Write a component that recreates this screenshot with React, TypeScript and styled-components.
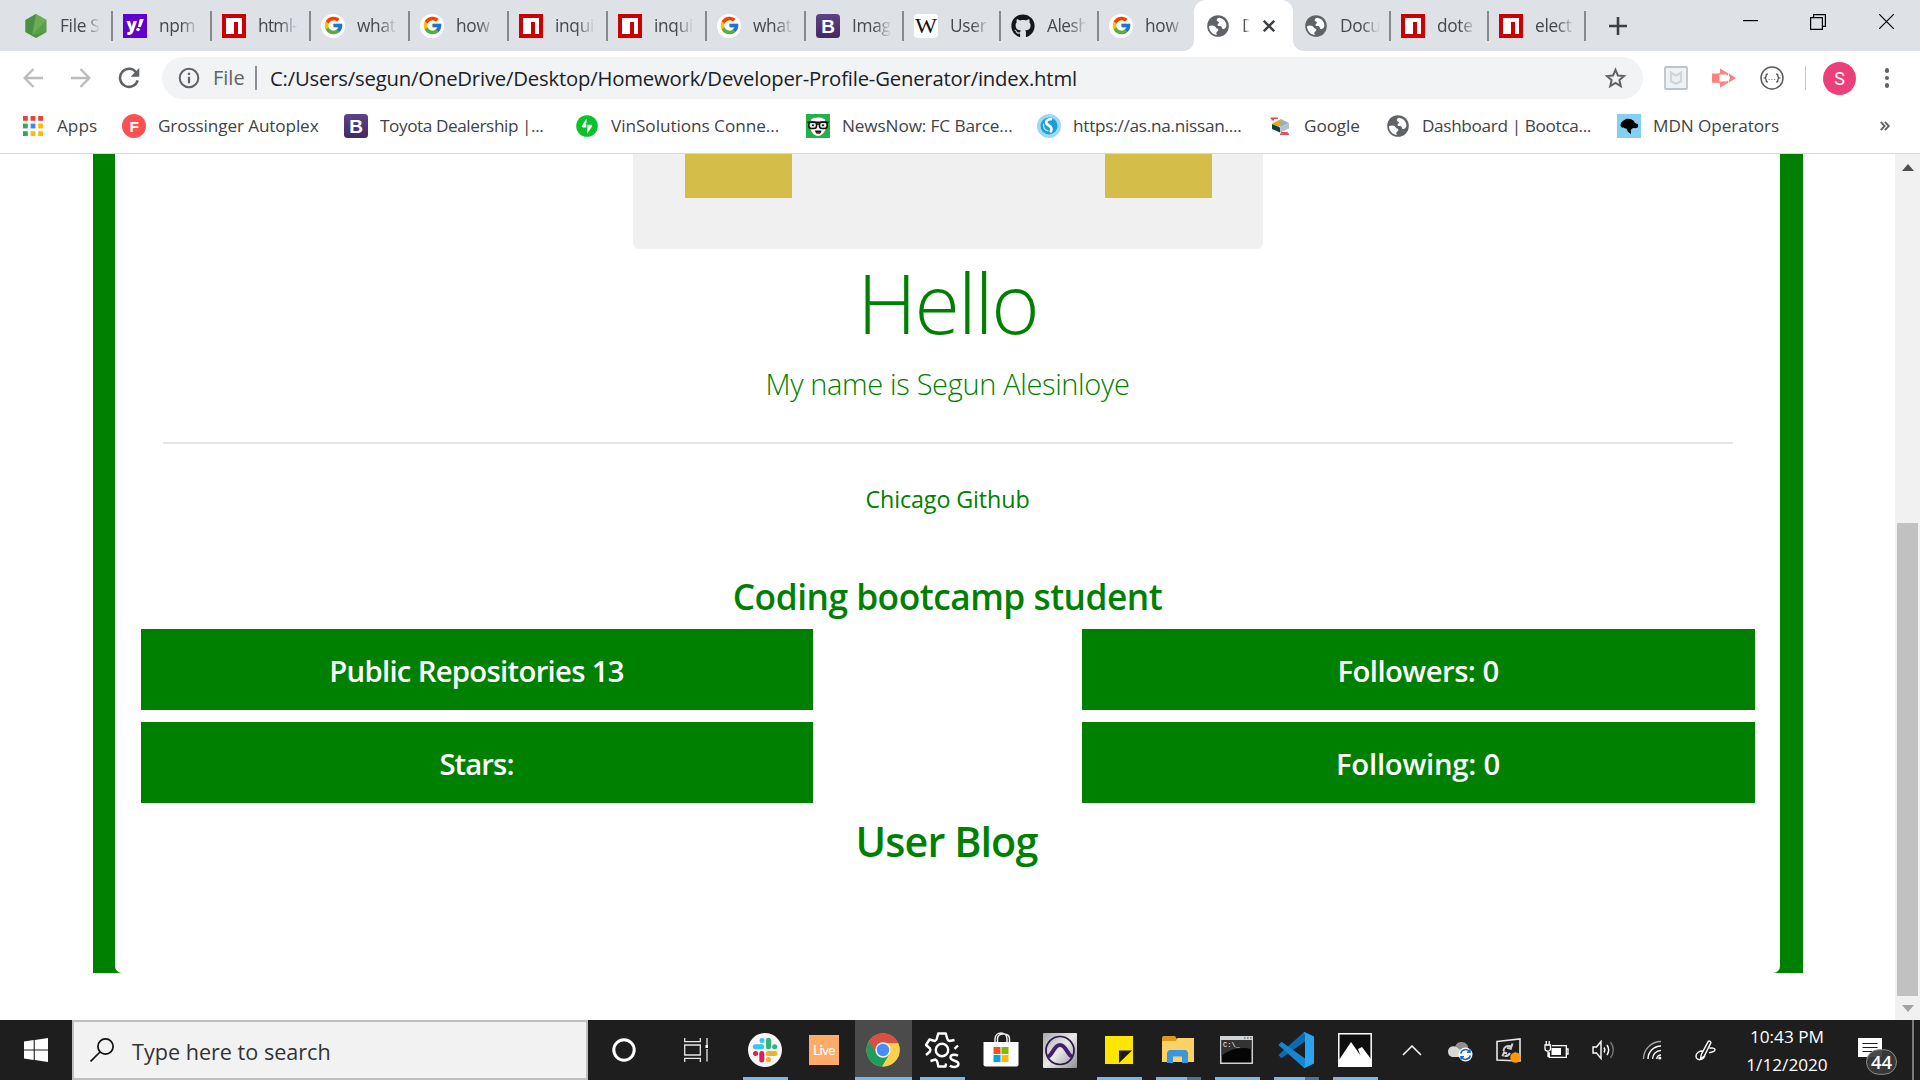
import React from "react";
import styled, { createGlobalStyle, css } from "styled-components";
import { FcGoogle } from "react-icons/fc";
import { FaGithub } from "react-icons/fa";

const UI_FONT = `"Open Sans", "Noto Sans", sans-serif`;

const GlobalStyle = createGlobalStyle`
  *, *::before, *::after { box-sizing: border-box; }
  html, body { margin: 0; padding: 0; }
  body {
    width: 1920px;
    height: 1080px;
    overflow: hidden;
    background: #ffffff;
    font-family: ${UI_FONT};
  }
  svg { display: block; flex: none; }
`;

const Screen = styled.div`
  display: flex;
  flex-direction: column;
  width: 1920px;
  height: 1080px;
  overflow: hidden;
`;

/* ---------- Browser: tab strip ---------- */

const TabStrip = styled.div`
  display: flex;
  height: 51px;
  background: #dee1e6;
`;

const Tab = styled.div<{ $w: number; $pad: number; $active?: boolean; $line?: boolean }>`
  display: flex;
  align-items: center;
  flex: none;
  width: ${(p) => p.$w}px;
  padding-left: ${(p) => p.$pad}px;
  ${(p) =>
    p.$line &&
    css`
      background: linear-gradient(#87898d, #87898d) right 0 top 11px / 2px 30px no-repeat;
    `}
  ${(p) =>
    p.$active &&
    css`
      background: #ffffff;
      border-radius: 12px 12px 0 0;
    `}
`;

const TabCurve = styled.div<{ $side: "left" | "right" }>`
  flex: none;
  width: 10px;
  margin-${(p) => p.$side}: -10px;
  align-self: flex-end;
  height: 10px;
  background: radial-gradient(
    circle at ${(p) => (p.$side === "left" ? "0 0" : "100% 0")},
    transparent 9.5px,
    #ffffff 10px
  );
`;

const TabTitle = styled.span<{ $w: number; $fade: number; $ls: number }>`
  width: ${(p) => p.$w}px;
  margin-left: 12px;
  overflow: hidden;
  white-space: nowrap;
  font-size: 17.3px;
  line-height: 30px;
  letter-spacing: ${(p) => p.$ls}px;
  color: #45494d;
  -webkit-mask-image: linear-gradient(to right, #000 ${(p) => p.$fade}px, transparent 100%);
  mask-image: linear-gradient(to right, #000 ${(p) => p.$fade}px, transparent 100%);
`;

const CloseTab = styled.span`
  margin-left: 13px;
`;

const NewTab = styled.div`
  display: flex;
  align-items: center;
  width: 144px;
  padding-left: 23px;
`;

const WindowButton = styled.div`
  display: flex;
  flex: none;
  justify-content: center;
  width: 68px;
  height: 43px;
  align-items: center;
`;

/* ---------- Browser: toolbar ---------- */

const Toolbar = styled.div`
  display: flex;
  align-items: center;
  height: 54px;
  background: #ffffff;
`;

const NavButton = styled.div<{ $w: number }>`
  display: flex;
  justify-content: center;
  flex: none;
  width: ${(p) => p.$w}px;
`;

const Omnibox = styled.div`
  display: flex;
  align-items: center;
  flex: none;
  width: 1481px;
  height: 42px;
  padding: 0 16px;
  border-radius: 21px;
  background: #f1f3f4;
`;

const Scheme = styled.span`
  width: 42px;
  margin-left: 13px;
  font-size: 20px;
  line-height: 30px;
  color: #5f6368;
  white-space: nowrap;
`;

const SchemeRule = styled.span`
  width: 2px;
  height: 24px;
  margin-right: 13px;
  background: #8c8f93;
`;

const Url = styled.span`
  flex: 1;
  font-size: 20.3px;
  line-height: 30px;
  letter-spacing: -0.19px;
  color: #202124;
  white-space: nowrap;
`;

const Extensions = styled.div`
  display: flex;
  align-items: center;
  margin-left: 21px;
  gap: 24px;
`;

const ToolbarRule = styled.span`
  width: 1px;
  height: 24px;
  margin: 0 17px 0 21px;
  background: #c6c9cd;
`;

const Avatar = styled.div`
  display: flex;
  align-items: center;
  justify-content: center;
  width: 33px;
  height: 33px;
  border-radius: 50%;
  background: #ec407a;
  color: #ffffff;
  font: 400 18px/33px Roboto, sans-serif;
`;

const MenuDots = styled.div`
  display: flex;
  flex-direction: column;
  gap: 3.2px;
  margin-left: 28.5px;
`;

const Dot = styled.i`
  width: 4.6px;
  height: 4.6px;
  border-radius: 50%;
  background: #5f6368;
`;

/* ---------- Browser: bookmarks ---------- */

const BookmarkBar = styled.div`
  display: flex;
  align-items: center;
  height: 49px;
  padding: 0 0 6px 21px;
  background: #ffffff;
  border-bottom: 1px solid #d6d8da;
`;

const Bookmark = styled.div<{ $w: number }>`
  display: flex;
  align-items: center;
  flex: none;
  gap: 12px;
  width: ${(p) => p.$w}px;
`;

const BookmarkIcon = styled.span`
  display: flex;
  align-items: center;
  justify-content: center;
  flex: none;
  width: 24px;
  height: 24px;
`;

const BookmarkName = styled.span<{ $ls: number }>`
  font-size: 17.2px;
  line-height: 30px;
  letter-spacing: ${(p) => p.$ls}px;
  color: #3f4347;
  white-space: nowrap;
`;

/* ---------- Page ---------- */

const Viewport = styled.main`
  display: flex;
  height: 866px;
  background: #ffffff;
`;

const PageArea = styled.div`
  width: 1895px;
  padding-left: 93px;
`;

const GreenFrame = styled.section`
  width: 1710px;
  height: 819px;
  padding: 0 23px 0 22px;
  background: #008000;
`;

const Card = styled.div`
  display: flex;
  flex-direction: column;
  align-items: center;
  height: 819px;
  border-radius: 0 0 7px 7px;
  background: #ffffff;
  color: #008000;
`;

const Identicon = styled.div`
  display: flex;
  justify-content: space-between;
  width: 630px;
  height: 95px;
  padding: 0 51px 0 52px;
  border-radius: 0 0 6px 6px;
  background: #f0f0f0;
`;

const Block = styled.div`
  width: 107px;
  height: 44px;
  background: #d4be49;
`;

const Hello = styled.h1`
  margin: 0;
  font-size: 82.6px;
  font-weight: 300;
  line-height: 106px;
  letter-spacing: -2px;
`;

const Lead = styled.p`
  margin: 0;
  font-size: 29px;
  font-weight: 300;
  line-height: 57px;
  letter-spacing: -0.35px;
`;

const Rule = styled.hr`
  width: 1570px;
  height: 2px;
  margin: 30px 0 0;
  border: 0;
  background: #e6e6e6;
`;

const Place = styled.p`
  margin: 0;
  font-size: 23.3px;
  line-height: 110px;
  letter-spacing: -0.1px;
`;

const Bio = styled.h4`
  margin: 0;
  padding-top: 9px;
  height: 75px;
  font-size: 35.3px;
  font-weight: 600;
  line-height: 66px;
  letter-spacing: -0.5px;
`;

const Stats = styled.div`
  display: grid;
  grid-template-columns: 672px 673px;
  grid-auto-rows: 81px;
  justify-content: space-between;
  row-gap: 12px;
  width: 1614px;
`;

const Stat = styled.div<{ $ls: number }>`
  padding-top: 2px;
  background: #008000;
  color: #ffffff;
  font-size: 29.3px;
  font-weight: 600;
  line-height: 81px;
  letter-spacing: ${(p) => p.$ls}px;
  text-align: center;
`;

const Blog = styled.h3`
  margin: 0 2px 0 0;
  padding-top: 1px;
  font-size: 41.3px;
  font-weight: 600;
  line-height: 75px;
  letter-spacing: -0.9px;
`;

const Scrollbar = styled.div`
  display: flex;
  flex-direction: column;
  align-items: center;
  width: 25px;
  padding-top: 10px;
  background: #f1f1f1;
`;

const Thumb = styled.div`
  width: 21px;
  height: 473px;
  margin: 352px 0 9px;
  background: #c1c1c1;
`;

/* ---------- Taskbar ---------- */

const Taskbar = styled.footer`
  display: flex;
  height: 60px;
  background: #1e1e1e;
  color: #ffffff;
`;

const TaskCell = styled.div<{ $w: number }>`
  display: flex;
  align-items: center;
  justify-content: center;
  flex: none;
  width: ${(p) => p.$w}px;
`;

const NotifyCell = styled.div`
  display: flex;
  flex: none;
  width: 72px;
  padding: 17px 0 0 18px;
`;

const SearchBox = styled.div`
  display: flex;
  align-items: center;
  gap: 18px;
  width: 516px;
  padding-left: 16px;
  background: #f2f2f2;
  border: 2px solid #bfbfbf;
`;

const SearchHint = styled.span`
  margin-top: 4px;
  font-size: 21.6px;
  line-height: 30px;
  color: #333333;
  white-space: nowrap;
`;

const AppRow = styled.div`
  display: flex;
  margin: 0 3px 0 4px;
`;

const AppCell = styled.div<{ $active?: boolean }>`
  display: flex;
  flex-direction: column;
  align-items: center;
  width: 57px;
  margin: 0 1px;
  background: ${(p) => (p.$active ? "#4b4b4b" : "transparent")};
`;

const AppIcon = styled.div`
  display: flex;
  align-items: center;
  justify-content: center;
  height: 57px;
  padding: 3px 2px 0 0;
`;

const Underline = styled.div<{ $w: number; $stacked?: boolean }>`
  width: ${(p) => p.$w}px;
  height: 3px;
  background: ${(p) =>
    p.$stacked ? "linear-gradient(to right, #76b9ed 69%, #4a7599 69%)" : "#76b9ed"};
`;

const Clock = styled.div`
  display: flex;
  flex-direction: column;
  align-items: center;
  width: 106px;
  padding-top: 3px;
  font-size: 17.2px;
  line-height: 28px;
  white-space: nowrap;
`;

const ShowDesktop = styled.div`
  width: 8px;
  border-left: 2px solid #7a7a7a;
`;

/* ---------- Icons ---------- */

const NpmIcon = () => (
  <svg width="24" height="24" viewBox="0 0 24 24">
    <path fill="#cb0000" d="M0 0h24v24H0z" />
    <path fill="#fff" d="M4 4h16v16h-4V8h-4v12H4z" />
  </svg>
);

const NodeIcon = () => (
  <svg width="24" height="24" viewBox="0 0 24 24">
    <path fill="#5b9f48" d="M12 0l10.500 6v12L12 24 1.500 18V6z" />
    <path fill="#4a8f44" d="M12 0L1.500 6v12L9 22.200z" />
    <path fill="#77b55a" d="M12 0l10.500 6L8 21z" opacity=".65" />
    <path fill="#44883e" d="M22.500 18L12 24l-4-2.300z" opacity=".6" />
  </svg>
);

const YahooIcon = () => (
  <svg width="24" height="24" viewBox="0 0 24 24">
    <path fill="#5f01d1" d="M0 0h24v24H0z" />
    <text x="3.600" y="16.500" fill="#fff" fontFamily="Open Sans" fontWeight="800" fontSize="17">
      y
    </text>
    <path fill="#fff" d="M16.800 5h4l-3 8h-2.900z" />
    <circle cx="15" cy="15.500" r="1.800" fill="#fff" />
  </svg>
);

const GoogleBadge = styled.span`
  display: flex;
  align-items: center;
  justify-content: center;
  flex: none;
  width: 24px;
  height: 24px;
  border-radius: 50%;
  background: #ffffff;
`;

const GoogleIcon = () => (
  <GoogleBadge>
    <FcGoogle size={21} />
  </GoogleBadge>
);

const BootstrapIcon = () => (
  <svg width="24" height="24" viewBox="0 0 24 24">
    <defs>
      <linearGradient id="bs" x1="0" y1="0" x2="0" y2="1">
        <stop offset="0" stopColor="#5f4288" />
        <stop offset="1" stopColor="#44295f" />
      </linearGradient>
    </defs>
    <rect width="24" height="24" rx="3.500" fill="url(#bs)" />
    <text x="12" y="18.500" textAnchor="middle" fill="#fff" fontFamily="Liberation Sans" fontWeight="700" fontSize="19">
      B
    </text>
  </svg>
);

const WikiIcon = () => (
  <svg width="24" height="24" viewBox="0 0 24 24">
    <rect width="24" height="24" rx="4" fill="#fff" />
    <text x="1" y="19" fill="#111" fontFamily="Liberation Serif" fontSize="21.500" textLength="22" lengthAdjust="spacingAndGlyphs">
      W
    </text>
  </svg>
);

const GlobeIcon = () => (
  <svg width="24" height="24" viewBox="0 0 24 24">
    <circle cx="12" cy="12" r="10.800" fill="#5f6368" />
    <path
      fill="#fff"
      d="M13.200 3.800c-2.200.6-2.700 1.700-2.400 2.700.4 1.200 2 .9 2.200 2 .2 1-1 1.200-1.400 2-.4.900.4 1.500 1.700 1.500 1.600 0 2.400.6 2.600 1.700.2 1 .8 1.500 1.800 1.300 1.700-.4 2.600-1.700 2.700-3.500.1-3.400-2.900-7-7.200-7.700z"
    />
    <path
      fill="#fff"
      d="M3 12.200c1.500-.7 4.200-.9 5.700 0 1.300.8 1.100 1.900 2.300 2.300 1.200.3 1.600 1 1.200 2.100-.4 1-1.700 1.100-1.900 2.400-.1.900.2 1.500 1.200 2C6.600 20.700 3 17 3 12.200z"
    />
  </svg>
);

const AppsIcon = () => {
  const colors = ["#ea4335", "#ea4335", "#ea4335", "#34a853", "#4285f4", "#fbbc05", "#34a853", "#fbbc05", "#fbbc05"];
  return (
    <svg width="20" height="20" viewBox="0 0 20 20">
      {colors.map((c, i) => (
        <rect key={i} x={(i % 3) * 7.6} y={Math.floor(i / 3) * 7.6} width="4.800" height="4.800" fill={c} />
      ))}
    </svg>
  );
};

const FIcon = () => (
  <svg width="24" height="24" viewBox="0 0 24 24">
    <circle cx="12" cy="12" r="12" fill="#fd5050" />
    <text x="12.300" y="17.500" textAnchor="middle" fill="#fff" fontFamily="Liberation Sans" fontWeight="700" fontSize="15.500">
      F
    </text>
  </svg>
);

const VinIcon = () => (
  <svg width="22" height="22" viewBox="0 0 22 22">
    <circle cx="11" cy="11" r="10.800" fill="#0bc22c" />
    <path fill="#fff" d="M10.500 3.500v6.300h4.300c1.300 0 1.600 1 1 2l-4.600 7v-6.300H7.300c-1.400 0-1.800-1-1-2.200z" />
    <path stroke="#0bc22c" strokeWidth="1.200" d="M10.800 8v6" />
  </svg>
);

const NewsIcon = () => (
  <svg width="24" height="24" viewBox="0 0 24 24">
    <path fill="#24b04b" d="M0 0h24v24H0z" />
    <path fill="#fff" d="M5 5.500C7 3 16 2.500 19 5.500l.8 8c-.3 4-4 8.500-7.800 8.500s-7-4-7.600-8z" />
    <g fill="#dfe9e2" stroke="#111" strokeWidth="1.500">
      <rect x="2.800" y="8" width="7.800" height="6.500" rx="2.800" />
      <rect x="13.400" y="8" width="7.800" height="6.500" rx="2.800" />
    </g>
    <path stroke="#111" strokeWidth="1.600" d="M1.500 8.300h21M10 10h4" />
    <circle cx="7" cy="11.200" r="1" fill="#111" />
    <circle cx="17" cy="11.200" r="1" fill="#111" />
    <path fill="#151515" d="M9 16.500h6.500c-.4 2.600-1.600 3.500-3.200 3.500s-2.900-1-3.300-3.500z" />
    <path fill="#e23" d="M10 19c1-1 3-1 4 0-.8 1.400-3.200 1.400-4 0z" />
  </svg>
);

const NissanIcon = () => (
  <svg width="24" height="24" viewBox="0 0 24 24">
    <circle cx="12" cy="12" r="12" fill="#9fd8f2" />
    <circle cx="12" cy="12" r="8.500" fill="#1a9fdb" />
    <path
      fill="none"
      stroke="#fff"
      strokeWidth="2.600"
      strokeLinecap="round"
      d="M14 5.200C8.500 5 8 9.300 11.200 11c3.600 2 4 4.300 2.600 6.500"
    />
    <path fill="none" stroke="#bfe6f7" strokeWidth="1.200" strokeLinecap="round" d="M6.500 10c-.3 3.500 1 6 4.500 6.800" />
  </svg>
);

const BoxIcon = () => (
  <svg width="20" height="18" viewBox="0 0 20 18">
    <path fill="#e9a62b" d="M2 6.500l9-4.500v6.500L8 10z" />
    <path fill="#8fb3c4" d="M11 2l8 4-9 4.500z" />
    <path fill="#173d3c" d="M2 7l8 3.500v5L2 12z" />
    <path fill="#b9c0c8" d="M10 10.500L19 6v5.500l-9 4z" />
    <path stroke="#d6323e" strokeWidth="1.400" opacity=".85" d="M.5 1.200h7.500M1.500 2.800h2.500M11 15.500l7 .5M10 17.200h9" />
  </svg>
);

const MdnIcon = () => (
  <svg width="24" height="24" viewBox="0 0 24 24">
    <path fill="#83d0f2" d="M0 0h24v24H0z" />
    <path
      fill="#000"
      d="M3.300 11.500l1-3 2.200-2 3-1.700 4 .2 3 1.500 1.500 2.500 3.200 1.500-.4 3-2.600.8-2.200-.2-2.200 2 .2 4-3-2-1.500-3.500-1.500-.2-1.500-1-1.700.2z"
    />
  </svg>
);

const BackArrow = ({ flip }: { flip?: boolean }) => (
  <svg width="20" height="20" viewBox="0 0 20 20">
    <path
      fill="none"
      stroke="#babcbe"
      strokeWidth="2.400"
      d={flip ? "M0 10h18M9.500 1l8.800 9-8.800 9" : "M20 10H2M10.500 1L1.700 10l8.800 9"}
    />
  </svg>
);

const ReloadIcon = () => (
  <svg width="22" height="22" viewBox="0 0 22 22">
    <path fill="none" stroke="#5f6368" strokeWidth="2.500" d="M18.300 5.500A9 9 0 1 0 19.700 13.300" />
    <path fill="#5f6368" d="M21.300 1v8.700h-8.700z" />
  </svg>
);

const InfoIcon = () => (
  <svg width="22" height="22" viewBox="0 0 22 22">
    <circle cx="11" cy="11" r="9.300" fill="none" stroke="#5f6368" strokeWidth="2" />
    <path stroke="#5f6368" strokeWidth="2.200" d="M11 9.700v6.500M11 5.800v2.300" />
  </svg>
);

const StarIcon = () => (
  <svg width="22" height="22" viewBox="0 0 22 22">
    <path
      fill="none"
      stroke="#5f6368"
      strokeWidth="2"
      d="M10.500 2.800l2.400 5.700 6.200.5-4.700 4.100 1.400 6.100-5.300-3.200-5.300 3.200 1.400-6.100L1.900 9l6.200-.5z"
    />
  </svg>
);

const McAfeeIcon = () => (
  <svg width="24" height="24" viewBox="0 0 24 24">
    <rect x="1" y="1" width="22" height="22" rx="1" fill="#f0f1f2" stroke="#bcc4cb" strokeWidth="1.800" />
    <path fill="none" stroke="#d0d5d9" strokeWidth="2.200" d="M7 6.800v8.500l5 2.500 5-2.500V6.800l-5 3z" />
  </svg>
);

const CastIcon = () => (
  <svg width="24" height="24" viewBox="0 0 24 24">
    <path fill="#ff8080" d="M0 7.500h7.500v9.200H0zM8 2.500l8 4.800H8zM17 7.500l7 4.500-7 4.500v-2.200l1-2.300-1-2.400zM8 16.800h8l-8 5z" />
    <path fill="none" stroke="#ff8080" strokeWidth="1.500" d="M7 7.800h8.500v1.500M7 16.300h8.500v-1.500" />
  </svg>
);

const BracesIcon = () => (
  <svg width="24" height="24" viewBox="0 0 24 24">
    <circle cx="12" cy="12" r="11" fill="none" stroke="#5b5d60" strokeWidth="1.500" />
    <path
      fill="none"
      stroke="#444"
      strokeWidth="1.300"
      d="M7.800 8c-1.300 0-1.700.5-1.600 1.600 0 1.400-.2 2-1.400 2.400 1.200.4 1.400 1 1.400 2.400-.1 1.100.3 1.600 1.600 1.600M16.200 8c1.300 0 1.700.5 1.600 1.600 0 1.400.2 2 1.400 2.400-1.200.4-1.400 1-1.400 2.400.1 1.100-.3 1.600-1.600 1.600"
    />
    <path stroke="#888" strokeWidth="1.200" strokeDasharray="1.200 1.500" d="M8.600 13.500h7" />
  </svg>
);

const ScrollArrow = ({ down }: { down?: boolean }) => (
  <svg width="12" height="7" viewBox="0 0 12 7">
    {down ? <path fill="#a3a3a3" d="M0 0h12L6 7z" /> : <path fill="#505050" d="M0 7h12L6 0z" />}
  </svg>
);

const WindowsIcon = () => (
  <svg width="24" height="24" viewBox="0 0 24 24">
    <path fill="#fff" d="M0 3.400L9.700 2v9.400H0zM10.800 1.900L24 0v11.400H10.800zM0 12.500h9.700V22L0 20.600zM10.800 12.500H24V24l-13.200-1.900z" />
  </svg>
);

const SearchIcon = () => (
  <svg width="24" height="24" viewBox="0 0 24 24">
    <circle cx="15.500" cy="8.500" r="7.600" fill="none" stroke="#111" strokeWidth="1.700" />
    <path stroke="#111" strokeWidth="1.700" d="M10 14L.5 23.500" />
  </svg>
);

const TaskViewIcon = () => (
  <svg width="24" height="24" viewBox="0 0 24 24" fill="none" stroke="#e8e8e8" strokeWidth="1.300">
    <path d="M.7 0v3.700h15.600V0M.7 7h15.600v10H.7zM.7 24v-3.700h15.600V24M23 0v7M23 11v12.500" />
    <path fill="#fff" stroke="none" d="M21.500 7h3v3h-3z" />
  </svg>
);

const SlackIcon = () => (
  <svg width="34" height="34" viewBox="0 0 34 34">
    <circle cx="17" cy="17" r="17" fill="#f6f6f6" />
    <g strokeWidth="5" strokeLinecap="round" fill="none">
      <path stroke="#36c5f0" d="M7.300 13.800h6.500M14 7.500v.1" />
      <path stroke="#2eb67d" d="M20.500 7.300v6.500M26.700 13.800h-.1" />
      <path stroke="#ecb22e" d="M20.300 20.400h6.600M20.500 26.700v-.1" />
      <path stroke="#e01e5a" d="M13.800 20.400v6.500M7.500 20.400h.1" />
    </g>
  </svg>
);

const LiveIcon = () => (
  <svg width="30" height="30" viewBox="0 0 30 30">
    <path fill="#ffac69" d="M0 0h30v30H0z" />
    <text x="4" y="20" fill="#fff" fontFamily="Lato" fontWeight="400" fontSize="13.500" textLength="22.500">
      Live
    </text>
  </svg>
);

const ChromeIcon = () => (
  <svg width="34" height="34" viewBox="0 0 34 34">
    <circle cx="17" cy="17" r="16.500" fill="#fdd04a" />
    <path fill="#1e9e5c" d="M17 17L2.900 8.400A16.500 16.500 0 0 0 16 33.500l7.500-12.600z" />
    <path fill="#fdd04a" d="M17 17l7 4-7.500 12.500A16.500 16.500 0 0 0 32.300 10.200H17z" />
    <path fill="#d94f41" d="M2.900 8.300A16.500 16.500 0 0 1 32.200 10H17l-7.300 7z" />
    <path fill="#d94f41" d="M2.900 8.300L10 20l4-9z" />
    <circle cx="17" cy="17" r="7.700" fill="#f4f4f4" />
    <circle cx="17" cy="17" r="6.200" fill="#4c8bf5" />
  </svg>
);

const GearBadge = () => (
  <svg width="36" height="38" viewBox="0 0 36 38">
    <g fill="none" stroke="#fff" strokeWidth="2.400" strokeLinejoin="round">
      <circle cx="18" cy="19" r="6.200" />
      <path d="M2 24L6 20.500c.5-1 .5-2 0-3L2 14l3.500-5.500L11 10c1.300-.6 2-1.500 2-3l1.200-4.500h7.600L23 7c.3 1.500 1 2.400 2.300 3L30.500 9M34 14.500l-3.500 3.300M6.500 30l5-1.500c1.200.6 1.700 1.500 2 3l.8 4h7.200l.5-3" />
    </g>
    <path
      fill="none"
      stroke="#fff"
      strokeWidth="2.400"
      d="M34 24.700c-2.500-1.600-7.500-1.500-7.500 1.900 0 4 8 2.300 8 6.200 0 3.700-5.800 3.900-8.700 1.900"
    />
  </svg>
);

const StoreIcon = () => (
  <svg width="36" height="36" viewBox="0 0 36 36">
    <path fill="none" stroke="#eee" strokeWidth="1.500" d="M12 10V7c0-8 12-8 12 0v3M14.500 10V6c1-5.500 12-5.500 12 1v3" />
    <path fill="#fff" d="M.5 10h35v22.500a2 2 0 0 1-2 2h-31a2 2 0 0 1-2-2z" />
    <path fill="#f25022" d="M10.500 15h7v7h-7z" />
    <path fill="#7fba00" d="M18.500 15h7v7h-7z" />
    <path fill="#00a4ef" d="M10.500 23h7v7h-7z" />
    <path fill="#ffb900" d="M18.500 23h7v7h-7z" />
  </svg>
);

const ProToolsIcon = () => (
  <svg width="34" height="35" viewBox="0 0 34 35">
    <defs>
      <linearGradient id="pt" x1="0" y1="0" x2="1" y2="1">
        <stop offset="0" stopColor="#a9a9ad" />
        <stop offset=".5" stopColor="#e9e9ec" />
        <stop offset="1" stopColor="#8d8d92" />
      </linearGradient>
    </defs>
    <rect width="34" height="35" rx="1" fill="url(#pt)" />
    <circle cx="17" cy="17.500" r="14" fill="none" stroke="#2a1440" strokeWidth="1.700" />
    <path fill="none" stroke="#45206e" strokeWidth="4" d="M4.500 23.500c5 0 6-11.500 12.500-11.500s7.500 11.500 12.500 11.500" />
  </svg>
);

const NotesIcon = () => (
  <svg width="28" height="28" viewBox="0 0 28 28">
    <path fill="#ffe500" d="M0 0h28v28H0z" />
    <path fill="#1b1b1b" d="M14 14.500h13L14 27z" />
    <path fill="#ffe500" d="M27.500 15.500V28H15z" />
  </svg>
);

const FolderIcon = () => (
  <svg width="32" height="28" viewBox="0 0 32 28">
    <path fill="#dd9a16" d="M0 1.500L1 0h12l2 3v5H0z" />
    <path fill="#fbd266" d="M0 5h14l1.500-3H32v24H0z" />
    <path fill="#3b96dd" d="M5 16.500l2-2.500h17l2 2.500V27h-6v-6.500h-9V27H5z" />
  </svg>
);

const CmdIcon = () => (
  <svg width="33" height="28" viewBox="0 0 33 28">
    <path fill="#cfd3d6" d="M0 0h33v28H0z" />
    <path fill="#050505" d="M1.500 4h30v22.500h-30z" />
    <path fill="#333" d="M31.500 4v9C20 10 8 14 1.500 20V4z" />
    <path fill="#777" d="M24 1.200h1.500v1.500H24zM27 1.200h1.500v1.500H27zM30 1.200h1.500v1.500H30z" />
    <text x="3" y="11" fill="#fff" fontFamily="Liberation Mono" fontSize="7">
      C:\_
    </text>
  </svg>
);

const CodeIcon = () => (
  <svg width="36" height="36" viewBox="0 0 36 36">
    <path fill="#0a6ab2" d="M.3 23L3.500 26.300 27 9.500V.8L25 1z" />
    <path fill="#1585cf" d="M.3 13l3.200-3.300L27 26.500v8.700L25 35z" />
    <path fill="#2aa4ee" d="M26.500 0L36 4.400v27.200L26.500 36 24.500 34.500c1.500.5 2.500-.2 2.500-1.500V3c0-1.300-1-2-2.500-1.500z" />
  </svg>
);

const PhotoIcon = () => (
  <svg width="34" height="34" viewBox="0 0 34 34">
    <path fill="#0e0e0e" stroke="#fff" strokeWidth="1.500" d="M.8.8h32.400v32.400H.8z" />
    <path fill="#fff" d="M1 27L13 9l9.500 13.500L20 16l4-2 9 12v7H1z" />
  </svg>
);

const CloudIcon = () => (
  <svg width="25" height="24" viewBox="0 0 25 24">
    <path fill="#8f8f8f" d="M7 9a7 7 0 0 1 12.500-2c1 2 .5 5 .5 6H7z" />
    <path fill="#d7d7d7" d="M0 13.500C0 9 5 6.500 9 9.500l8 6-5 3.500H5c-3 0-5-2.500-5-5.500z" />
    <circle cx="17.500" cy="16.500" r="7" fill="#fff" />
    <path fill="none" stroke="#0d69c4" strokeWidth="1.500" d="M12.700 15.500a5 5 0 0 1 9-1.700M22.300 17.500a5 5 0 0 1-9 1.700M22 11.300v3h-3M13 21.700v-3h3" />
  </svg>
);

const SyncIcon = () => (
  <svg width="25" height="25" viewBox="0 0 25 25">
    <path fill="none" stroke="#e8e8e8" strokeWidth="1.600" d="M1 3.500L24 1v22L1 22z" />
    <path fill="none" stroke="#d0d0d0" strokeWidth="2" d="M7.500 13c0-4 3.500-5.800 7-4.800M16.500 5.500l-1.800 5.300-3.500-1M6.500 18.300l1.500-4 3 1.200M8.500 18c2.500.3 4.500-.8 5.500-3" />
    <circle cx="19.500" cy="19.500" r="5.300" fill="#ff9800" />
  </svg>
);

const BatteryIcon = () => (
  <svg width="25" height="19" viewBox="0 0 25 19" fill="none" stroke="#fff" strokeWidth="1.300">
    <path d="M8 4.700h14.300v11.600H5.300v-5M22.300 8h1.700v5h-1.700M1 4v3.500C1 11 6.500 11 6.500 7.500V4zM2.300 0v4M5.200 0v4M4 10v6" />
    <path fill="#fff" stroke="none" d="M7.500 7H17v7H7.500z" />
  </svg>
);

const VolumeIcon = () => (
  <svg width="24" height="20" viewBox="0 0 24 20" fill="none" stroke="#fff" strokeWidth="1.400">
    <path d="M1 7h3.500L9 1.500v17L4.500 13H1z" />
    <path d="M12 7.500c1 1.500 1 3.500 0 5M15 5c2 3 2 7 0 10" />
    <path stroke="#777" d="M18.500 2c3.500 5 3.500 11 0 16" />
  </svg>
);

const WifiIcon = () => (
  <svg width="20" height="20" viewBox="0 0 20 20" fill="none" stroke="#fff" strokeWidth="1.400">
    <path stroke="#a8a8a8" d="M1.500 19A17.500 17.500 0 0 1 19 1.500" />
    <path d="M6 19A13 13 0 0 1 19 6M10.500 19a8.500 8.500 0 0 1 8.500-8.500M14.800 19a4 4 0 0 1 4.200-4" />
    <circle cx="17.800" cy="18" r="1.600" fill="#fff" stroke="none" />
  </svg>
);

const PenIcon = () => (
  <svg width="21" height="21" viewBox="0 0 21 21" fill="none" stroke="#fff" strokeWidth="1.400">
    <path d="M5.500 19l.8-4.500L13 1.800c.9-1.500 3.400-.3 2.700 1.300L9.300 16zM14.500 8.200c2-.5 5.500-.3 5.500 1.500 0 1.700-2.500 2.500-6 3M8 11c-3.500-.3-7 2-7 5.300 0 4.500 7 4.500 9-.8" />
  </svg>
);

const NotifyIcon = () => (
  <svg width="40" height="40" viewBox="0 0 40 40">
    <path fill="#fff" d="M0 1h24v19H12l-3 4v-4H0z" />
    <path stroke="#1e1e1e" strokeWidth="1.200" d="M4.500 6.500h15M4.500 10.500h15M4.500 14.500h10" />
    <rect x="8.500" y="12.700" width="30" height="24.600" rx="12.300" fill="#3a3a3a" fillOpacity=".93" stroke="#8b8b8b" />
    <text x="23.500" y="31.500" textAnchor="middle" fill="#fff" fontFamily="Open Sans" fontWeight="600" fontSize="18.500">
      44
    </text>
  </svg>
);

/* ---------- Data ---------- */

type TabItem = {
  icon: React.ReactNode;
  title: string;
  w: number;
  pad?: number;
  line?: boolean;
  ls?: number;
  fade?: number;
};

const leftTabs: TabItem[] = [
  { icon: <NodeIcon />, title: "File S", w: 113, pad: 24, line: true, fade: 26 },
  { icon: <YahooIcon />, title: "npm", w: 99, line: true },
  { icon: <NpmIcon />, title: "html-", w: 99, line: true, ls: -0.7 },
  { icon: <GoogleIcon />, title: "what", w: 99, line: true },
  { icon: <GoogleIcon />, title: "how", w: 99, line: true },
  { icon: <NpmIcon />, title: "inqui", w: 99, line: true },
  { icon: <NpmIcon />, title: "inqui", w: 99, line: true },
  { icon: <GoogleIcon />, title: "what", w: 99, line: true },
  { icon: <BootstrapIcon />, title: "Imag", w: 98, line: true },
  { icon: <WikiIcon />, title: "User", w: 97, line: true },
  { icon: <FaGithub size={24} color="#15171a" />, title: "Alesh", w: 98, line: true, ls: -0.5 },
  { icon: <GoogleIcon />, title: "how", w: 95, pad: 10 },
];

const rightTabs: TabItem[] = [
  { icon: <GlobeIcon />, title: "Docu", w: 98, pad: 11, line: true },
  { icon: <NpmIcon />, title: "dote", w: 98, line: true },
  { icon: <NpmIcon />, title: "elect", w: 97, line: true },
];

const bookmarks = [
  { icon: <AppsIcon />, name: "Apps", w: 101, ls: 0 },
  { icon: <FIcon />, name: "Grossinger Autoplex", w: 222, ls: -0.13 },
  { icon: <BootstrapIcon />, name: "Toyota Dealership |...", w: 231, ls: -0.42 },
  { icon: <VinIcon />, name: "VinSolutions Conne...", w: 231, ls: -0.05 },
  { icon: <NewsIcon />, name: "NewsNow: FC Barce...", w: 231, ls: -0.12 },
  { icon: <NissanIcon />, name: "https://as.na.nissan....", w: 231, ls: -0.27 },
  { icon: <BoxIcon />, name: "Google", w: 118, ls: -0.1 },
  { icon: <GlobeIcon />, name: "Dashboard | Bootca...", w: 231, ls: -0.35 },
  { icon: <MdnIcon />, name: "MDN Operators", w: 263, ls: -0.08 },
];

const apps = [
  { icon: <SlackIcon />, line: 45 },
  { icon: <LiveIcon />, line: 0 },
  { icon: <ChromeIcon />, line: 57, active: true },
  { icon: <GearBadge />, line: 45 },
  { icon: <StoreIcon />, line: 0 },
  { icon: <ProToolsIcon />, line: 0 },
  { icon: <NotesIcon />, line: 45 },
  { icon: <FolderIcon />, line: 45, stacked: true },
  { icon: <CmdIcon />, line: 45 },
  { icon: <CodeIcon />, line: 45, stacked: true },
  { icon: <PhotoIcon />, line: 45 },
];

const stats = [
  { text: "Public Repositories 13", ls: -0.7 },
  { text: "Followers: 0", ls: -0.55 },
  { text: "Stars:", ls: -0.9 },
  { text: "Following: 0", ls: -0.25 },
];

const renderTab = (t: TabItem, i: number) => (
  <Tab key={i} $w={t.w} $pad={t.pad ?? 10} $line={t.line}>
    {t.icon}
    <TabTitle $w={40} $fade={t.fade ?? 22} $ls={t.ls ?? -0.3}>
      {t.title}
    </TabTitle>
  </Tab>
);

export default function App() {
  return (
    <Screen>
      <GlobalStyle />

      <TabStrip>
        {leftTabs.map(renderTab)}
        <TabCurve $side="left" />
        <Tab $w={99} $pad={12} $active>
          <GlobeIcon />
          <TabTitle $w={8} $fade={2} $ls={0}>
            D
          </TabTitle>
          <CloseTab>
            <svg width="12" height="12" viewBox="0 0 12 12">
              <path stroke="#3c4043" strokeWidth="2.400" d="M.8.8l10.400 10.400M11.200.8L.8 11.200" />
            </svg>
          </CloseTab>
        </Tab>
        <TabCurve $side="right" />
        {rightTabs.map(renderTab)}
        <NewTab>
          <svg width="18" height="18" viewBox="0 0 18 18">
            <path stroke="#3c4043" strokeWidth="2.600" d="M9 0v18M0 9h18" />
          </svg>
        </NewTab>
        <WindowButton>
          <svg width="15" height="4" viewBox="0 0 15 4">
            <path fill="#000" d="M0 0h15v1.200H0z" />
          </svg>
        </WindowButton>
        <WindowButton>
          <svg width="16" height="16" viewBox="0 0 16 16" fill="none" stroke="#000" strokeWidth="1.200">
            <path d="M.6 3.600h11.800v11.800H.6zM3.600 3.600v-3h11.800v11.800h-3" />
          </svg>
        </WindowButton>
        <WindowButton>
          <svg width="15" height="15" viewBox="0 0 15 15">
            <path stroke="#000" strokeWidth="1.200" d="M0 0l15 15M15 0L0 15" />
          </svg>
        </WindowButton>
      </TabStrip>

      <Toolbar>
        <NavButton $w={66}>
          <BackArrow />
        </NavButton>
        <NavButton $w={30}>
          <BackArrow flip />
        </NavButton>
        <NavButton $w={66}>
          <ReloadIcon />
        </NavButton>
        <Omnibox>
          <InfoIcon />
          <Scheme>File</Scheme>
          <SchemeRule />
          <Url>C:/Users/segun/OneDrive/Desktop/Homework/Developer-Profile-Generator/index.html</Url>
          <StarIcon />
        </Omnibox>
        <Extensions>
          <McAfeeIcon />
          <CastIcon />
          <BracesIcon />
        </Extensions>
        <ToolbarRule />
        <Avatar>S</Avatar>
        <MenuDots>
          <Dot />
          <Dot />
          <Dot />
        </MenuDots>
      </Toolbar>

      <BookmarkBar>
        {bookmarks.map((b) => (
          <Bookmark key={b.name} $w={b.w}>
            <BookmarkIcon>{b.icon}</BookmarkIcon>
            <BookmarkName $ls={b.ls}>{b.name}</BookmarkName>
          </Bookmark>
        ))}
        <svg width="10" height="10" viewBox="0 0 10 10" fill="none" stroke="#5f6368" strokeWidth="1.900">
          <path d="M.8.8L4.600 5 .8 9.200M5 .8L8.800 5 5 9.200" />
        </svg>
      </BookmarkBar>

      <Viewport>
        <PageArea>
          <GreenFrame>
            <Card>
              <Identicon>
                <Block />
                <Block />
              </Identicon>
              <Hello>Hello</Hello>
              <Lead>My name is Segun Alesinloye</Lead>
              <Rule />
              <Place>Chicago Github</Place>
              <Bio>Coding bootcamp student</Bio>
              <Stats>
                {stats.map((s) => (
                  <Stat key={s.text} $ls={s.ls}>
                    {s.text}
                  </Stat>
                ))}
              </Stats>
              <Blog>User Blog</Blog>
            </Card>
          </GreenFrame>
        </PageArea>
        <Scrollbar>
          <ScrollArrow />
          <Thumb />
          <ScrollArrow down />
        </Scrollbar>
      </Viewport>

      <Taskbar>
        <TaskCell $w={72}>
          <WindowsIcon />
        </TaskCell>
        <SearchBox>
          <SearchIcon />
          <SearchHint>Type here to search</SearchHint>
        </SearchBox>
        <TaskCell $w={72}>
          <svg width="24" height="24" viewBox="0 0 24 24">
            <circle cx="12" cy="12" r="10.200" fill="none" stroke="#fff" strokeWidth="3" />
          </svg>
        </TaskCell>
        <TaskCell $w={72}>
          <TaskViewIcon />
        </TaskCell>
        <AppRow>
          {apps.map((a, i) => (
            <AppCell key={i} $active={a.active}>
              <AppIcon>{a.icon}</AppIcon>
              {a.line > 0 && <Underline $w={a.line} $stacked={a.stacked} />}
            </AppCell>
          ))}
        </AppRow>
        <TaskCell $w={48}>
          <svg width="20" height="11" viewBox="0 0 20 11">
            <path fill="none" stroke="#fff" strokeWidth="1.500" d="M1 10l9-9 9 9" />
          </svg>
        </TaskCell>
        <TaskCell $w={48}>
          <CloudIcon />
        </TaskCell>
        <TaskCell $w={48}>
          <SyncIcon />
        </TaskCell>
        <TaskCell $w={48}>
          <BatteryIcon />
        </TaskCell>
        <TaskCell $w={48}>
          <VolumeIcon />
        </TaskCell>
        <TaskCell $w={48}>
          <WifiIcon />
        </TaskCell>
        <TaskCell $w={58}>
          <PenIcon />
        </TaskCell>
        <Clock>
          <span>10:43 PM</span>
          <span>1/12/2020</span>
        </Clock>
        <NotifyCell>
          <NotifyIcon />
        </NotifyCell>
        <ShowDesktop />
      </Taskbar>
    </Screen>
  );
}
